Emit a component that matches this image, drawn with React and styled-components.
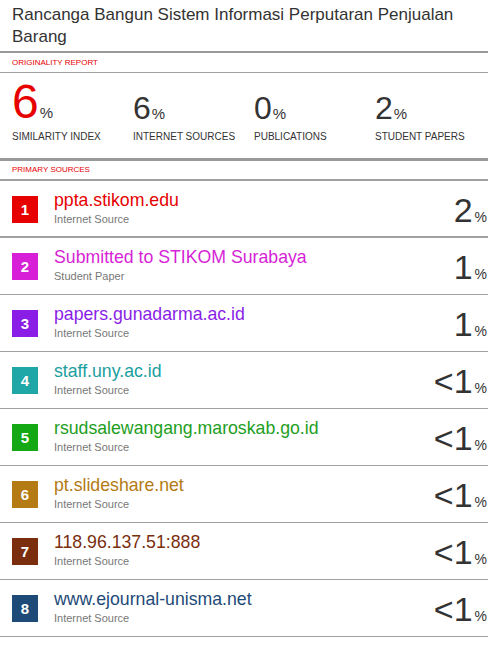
import React from 'react'
import styled, { createGlobalStyle } from 'styled-components'

const GlobalStyle = createGlobalStyle`
    body {
        margin: 0;
        background: #fff;
        font-family: "Liberation Sans", Arial, sans-serif;
        color: #333;
    }
`;

const stats = [
    { value: '6', label: 'SIMILARITY INDEX', main: true },
    { value: '6', label: 'INTERNET SOURCES' },
    { value: '0', label: 'PUBLICATIONS' },
    { value: '2', label: 'STUDENT PAPERS' },
]

const sources = [
    { name: 'ppta.stikom.edu', type: 'Internet Source', pct: '2', color: '#e60000', badge: '#e60000' },
    { name: 'Submitted to STIKOM Surabaya', type: 'Student Paper', pct: '1', color: '#d61fd6', badge: '#d61fd6' },
    { name: 'papers.gunadarma.ac.id', type: 'Internet Source', pct: '1', color: '#8a1ee6', badge: '#8a1ee6' },
    { name: 'staff.uny.ac.id', type: 'Internet Source', pct: '<1', color: '#1a9e9e', badge: '#1fa6a6' },
    { name: 'rsudsalewangang.maroskab.go.id', type: 'Internet Source', pct: '<1', color: '#1e9e1e', badge: '#14a814' },
    { name: 'pt.slideshare.net', type: 'Internet Source', pct: '<1', color: '#b47a14', badge: '#b47a14' },
    { name: '118.96.137.51:888', type: 'Internet Source', pct: '<1', color: '#7a2e0e', badge: '#7a2e0e' },
    { name: 'www.ejournal-unisma.net', type: 'Internet Source', pct: '<1', color: '#1e4a78', badge: '#1e4a78' },
]

function App() {
    return (
        <Page>
            <GlobalStyle />
            <Title>Rancanga Bangun Sistem Informasi Perputaran Penjualan Barang</Title>
            <SectionLabel>ORIGINALITY REPORT</SectionLabel>
            <Stats>
                {stats.map((s) => (
                    <Stat key={s.label}>
                        <StatNumber main={s.main}>
                            {s.value}<Pct>%</Pct>
                        </StatNumber>
                        <StatLabel>{s.label}</StatLabel>
                    </Stat>
                ))}
            </Stats>
            <SectionLabel thick>PRIMARY SOURCES</SectionLabel>
            {sources.map((s, i) => (
                <Row key={s.name} first={i === 0}>
                    <Badge color={s.badge}>{i + 1}</Badge>
                    <Info>
                        <Name color={s.color}>{s.name}</Name>
                        <Kind>{s.type}</Kind>
                    </Info>
                    <Share>{s.pct}<SharePct>%</SharePct></Share>
                </Row>
            ))}
        </Page>
    )
}
export default App

const Page = styled.div`
    width: 488px;
`;
const Title = styled.div`
    padding: 4px 12px 3px;
    font-size: 17px;
    line-height: 22px;
    color: #333;
    border-bottom: 2px solid #999;
`;
const SectionLabel = styled.div`
    height: ${(p) => (p.thick ? '18px' : '19px')};
    line-height: ${(p) => (p.thick ? '18px' : '19px')};
    padding: 0 12px;
    font-size: 8px;
    color: #e60000;
    border-bottom: ${(p) => (p.thick ? '2px' : '1px')} solid #a0a0a0;
    border-top: ${(p) => (p.thick ? '3px solid #999' : 'none')};
`;
const Stats = styled.div`
    display: flex;
    padding: 5px 12px 15px;
`;
const Stat = styled.div`
    flex: none;
    width: 121px;
    display: flex;
    flex-direction: column;
`;
const StatNumber = styled.div`
    box-sizing: border-box;
    height: 48px;
    line-height: 48px;
    padding-top: ${(p) => (p.main ? '0' : '5.5px')};
    font-size: ${(p) => (p.main ? '48px' : '32px')};
    color: ${(p) => (p.main ? '#e60000' : '#333')};
`;
const Pct = styled.span`
    font-size: 15px;
    color: #333;
    margin-left: 1px;
`;
const StatLabel = styled.div`
    font-size: 10px;
    line-height: 12px;
    margin-top: 5px;
    color: #333;
    white-space: nowrap;
`;
const Row = styled.div`
    box-sizing: border-box;
    height: 57px;
    display: flex;
    align-items: flex-start;
    padding: 0 1px 0 12px;
    border-bottom: ${(p) => (p.first ? '2px' : '1px')} solid #a0a0a0;
`;
const Badge = styled.div`
    width: 26px;
    height: 27px;
    margin-top: 15px;
    background: ${(p) => p.color};
    color: #fff;
    font-size: 15px;
    font-weight: bold;
    display: flex;
    align-items: center;
    justify-content: center;
`;
const Info = styled.div`
    margin: 6px 0 0 16px;
    flex: 1;
`;
const Name = styled.div`
    font-size: 17.7px;
    line-height: 26px;
    color: ${(p) => p.color};
    white-space: nowrap;
`;
const Kind = styled.div`
    font-size: 11px;
    line-height: 13px;
    color: #777;
`;
const Share = styled.div`
    margin-top: 12px;
    font-size: 34px;
    line-height: 34px;
    color: #333;
    white-space: nowrap;
`;
const SharePct = styled.span`
    font-size: 14px;
    margin-left: 2px;
`;
